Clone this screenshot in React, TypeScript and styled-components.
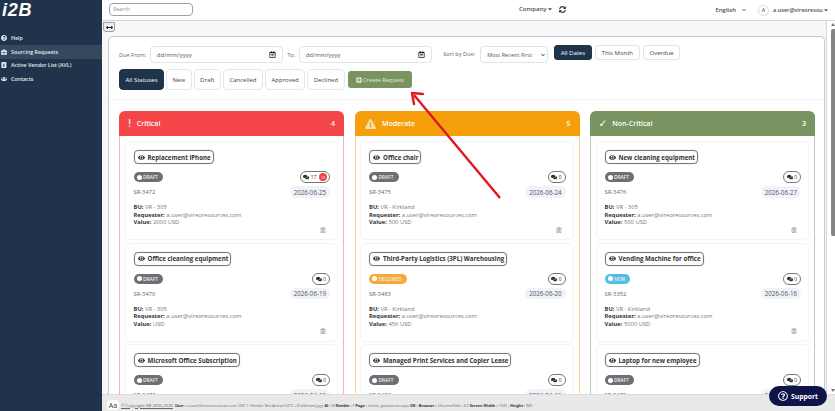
import React from "react";
import styled, { createGlobalStyle } from "styled-components";
import {
  FaAddressBook,
  FaBriefcase,
  FaChevronDown,
  FaComments,
  FaExclamationTriangle,
  FaEye,
  FaPlusSquare,
  FaQuestionCircle,
  FaRegCalendarAlt,
  FaRegQuestionCircle,
  FaRegTrashAlt,
  FaSyncAlt,
  FaUsers,
  FaCaretDown,
  FaArrowsAltH,
} from "react-icons/fa";

const GlobalStyle = createGlobalStyle`
  html, body { margin: 0; padding: 0; height: 100%; overflow: hidden; background: #fff; }
  * { box-sizing: border-box; }
  body { font-family: "Open Sans", "Liberation Sans", sans-serif; color: #3a4048; }
`;

type CardData = {
  title: string;
  status: "DRAFT" | "DECLINED" | "NEW";
  sr: string;
  date: string;
  bu: string;
  value: string;
  comments: string;
  alert?: string;
  trash?: boolean;
};

type ColumnData = {
  name: string;
  count: number;
  color: string;
  edge: string;
  icon: React.ReactNode;
  cards: CardData[];
};

const columns: ColumnData[] = [
  {
    name: "Critical",
    count: 4,
    color: "#f44548",
    edge: "#f9b5b6",
    icon: <Glyph>!</Glyph>,
    cards: [
      { title: "Replacement iPhone", status: "DRAFT", sr: "SR-3472", date: "2026-06-25", bu: "VR - 305", value: "2000 USD", comments: "17", alert: "12", trash: true },
      { title: "Office cleaning equipment", status: "DRAFT", sr: "SR-3470", date: "2026-06-19", bu: "VR - 305", value: "USD", comments: "0", trash: true },
      { title: "Microsoft Office Subscription", status: "DRAFT", sr: "SR-3473", date: "2026-06-15", bu: "VR - 305", value: "USD", comments: "0" },
    ],
  },
  {
    name: "Moderate",
    count: 5,
    color: "#f59f0c",
    edge: "#fbd48d",
    icon: <Triangle />,
    cards: [
      { title: "Office chair", status: "DRAFT", sr: "SR-3475", date: "2026-06-24", bu: "VR - Kirkland", value: "500 USD", comments: "0", trash: true },
      { title: "Third-Party Logistics (3PL) Warehousing", status: "DECLINED", sr: "SR-3483", date: "2026-06-20", bu: "VR - Kirkland", value: "456 USD", comments: "0" },
      { title: "Managed Print Services and Copier Lease", status: "DRAFT", sr: "SR-3482", date: "2026-06-19", bu: "VR - Kirkland", value: "USD", comments: "0" },
    ],
  },
  {
    name: "Non-Critical",
    count: 3,
    color: "#7a9461",
    edge: "#bccaaf",
    icon: <Glyph>✓</Glyph>,
    cards: [
      { title: "New cleaning equipment", status: "DRAFT", sr: "SR-3476", date: "2026-06-27", bu: "VR - 305", value: "500 USD", comments: "0", trash: true },
      { title: "Vending Machine for office", status: "NEW", sr: "SR-3352", date: "2026-06-16", bu: "VR - Kirkland", value: "5000 USD", comments: "0", trash: true },
      { title: "Laptop for new employee", status: "DRAFT", sr: "SR-3471", date: "2026-06-15", bu: "VR - Kirkland", value: "USD", comments: "0" },
    ],
  },
];

const statusColors = { DRAFT: "#6c6f73", DECLINED: "#f6a93b", NEW: "#4fc0e3" };

const statuses = ["All Statuses", "New", "Draft", "Cancelled", "Approved", "Declined"];

const App = () => {
  return (
    <Page>
      <GlobalStyle />
      <Sidebar>
        <Logo>i2B</Logo>
        <Menu>
          <MenuItem><FaQuestionCircle />Help</MenuItem>
          <MenuItem $active><FaBriefcase />Sourcing Requests</MenuItem>
          <MenuItem><FaAddressBook />Active Vendor List (AVL)</MenuItem>
          <MenuItem><FaUsers />Contacts</MenuItem>
        </Menu>
      </Sidebar>
      <Main>
        <TopBar>
          <SearchBox placeholder="Search" />
          <CompanyBlock>
            <TopText>Company</TopText>
            <FaCaretDown size={6} />
            <RefreshIcon><FaSyncAlt size={7} /></RefreshIcon>
          </CompanyBlock>
          <UserBlock>
            <TopText>English</TopText>
            <LanguageChevron><FaChevronDown size={4} /></LanguageChevron>
            <Avatar>A</Avatar>
            <UserText>a.user@vireoresou</UserText>
            <FaCaretDown size={6} />
          </UserBlock>
        </TopBar>
        <Workspace>
          <ScrollArea>
            <SubBar>
              <ToggleButton><FaArrowsAltH size={7} /></ToggleButton>
            </SubBar>
            <Panel>
              <Filters>
                <FilterRow>
                  <FilterLabel>Due From:</FilterLabel>
                  <DateField>dd/mm/yyyy<FaRegCalendarAlt size={7} color="#222" /></DateField>
                  <FilterLabel>To:</FilterLabel>
                  <DateField>dd/mm/yyyy<FaRegCalendarAlt size={7} color="#222" /></DateField>
                  <SortLabel>Sort by Due:</SortLabel>
                  <SortBox>Most Recent First<FaChevronDown size={4} color="#222" /></SortBox>
                  <DateTabs>
                    <DateTab $active>All Dates</DateTab>
                    <DateTab>This Month</DateTab>
                    <DateTab>Overdue</DateTab>
                  </DateTabs>
                </FilterRow>
                <StatusRow>
                  {statuses.map((s, i) => (
                    <StatusButton key={s} $active={i === 0}>{s}</StatusButton>
                  ))}
                  <CreateButton><FaPlusSquare size={6} />Create Request</CreateButton>
                </StatusRow>
              </Filters>
              <Board>
                {columns.map((col) => (
                  <Column key={col.name} $edge={col.edge}>
                    <ColumnHeader $color={col.color}>
                      <ColumnIcon>{col.icon}</ColumnIcon>
                      <ColumnName>{col.name}</ColumnName>
                      <span>{col.count}</span>
                    </ColumnHeader>
                    <CardList>
                      {col.cards.map((card) => (
                        <Card key={card.sr}>
                          <TitlePill><FaEye size={7} />{card.title}</TitlePill>
                          <BadgeRow>
                            <StatusBadge $color={statusColors[card.status]}><Dot />{card.status}</StatusBadge>
                            <CommentPill>
                              <FaComments size={6} />
                              {card.comments}
                              {card.alert && <AlertDot>{card.alert}</AlertDot>}
                            </CommentPill>
                          </BadgeRow>
                          <DateRow>
                            <SrText>{card.sr}</SrText>
                            <DatePill>{card.date}</DatePill>
                          </DateRow>
                          <Details>
                            <div><b>BU:</b> {card.bu}</div>
                            <div><b>Requester:</b> a.user@vireoresources.com</div>
                            <div><b>Value:</b> {card.value}</div>
                          </Details>
                          <TrashSlot>{card.trash && <FaRegTrashAlt size={6} />}</TrashSlot>
                        </Card>
                      ))}
                    </CardList>
                  </Column>
                ))}
              </Board>
            </Panel>
          </ScrollArea>
          <Scrollbar>
            <ScrollArrow $up />
            <ScrollThumb />
            <ScrollArrow />
          </Scrollbar>
        </Workspace>
        <Footer>
          <FontToggle>Aa</FontToggle>
          <u>© Copyright GB 2000-2026</u>
          <FooterInfo><b>User :</b> a.user@vireoresources.com USD 1 (Vendor Not Active) (UTC +0) dd/mm/yyyy <b>AI :</b> N <b>Nimble :</b> Y <b>Page :</b> sinnle_quotations.aspx <b>OK :</b> <b>Browser :</b> Chrome/Edit : 3.0 <b>Screen Width :</b> 1920 ; <b>Height :</b> 945</FooterInfo>
        </Footer>
      </Main>
      <SupportButton><FaRegQuestionCircle size={10} />Support</SupportButton>
      <ArrowOverlay width="835" height="411" viewBox="0 0 835 411">
        <path d="M500 198 L414 95" stroke="#e3161b" strokeWidth="2.4" fill="none" />
        <path d="M412 93 L423 94 M412 93 L414 104" stroke="#e3161b" strokeWidth="2.4" fill="none" strokeLinecap="round" />
      </ArrowOverlay>
    </Page>
  );
};

export default App;

function Glyph({ children }: { children: React.ReactNode }) {
  return <GlyphText>{children}</GlyphText>;
}

function Triangle() {
  return <TriangleIcon><FaExclamationTriangle /></TriangleIcon>;
}

const GlyphText = styled.span`
  font: 10.5px/11px "DejaVu Sans", sans-serif;
  color: #fff;
`;

const TriangleIcon = styled.span`
  display: flex;
  margin: 0 1px 0 2px;
  color: #f8dfae;
  svg { width: 11px; height: 10px; }
`;

const Page = styled.div`
  position: relative;
  display: flex;
  width: 835px;
  height: 411px;
  overflow: hidden;
`;

const Sidebar = styled.aside`
  width: 102px;
  flex-shrink: 0;
  background: #1f344b;
  color: #fff;
`;

const Logo = styled.div`
  height: 31px;
  padding: 1px 0 0 2px;
  font: italic 900 18px/18px "Liberation Sans", sans-serif;
  letter-spacing: 0.7px;
`;

const Menu = styled.nav`
  display: flex;
  flex-direction: column;
`;

const MenuItem = styled.div<{ $active?: boolean }>`
  display: flex;
  align-items: center;
  gap: 4px;
  height: 13.8px;
  padding-left: 1px;
  font-size: 5.3px;
  font-weight: 600;
  color: #e6ebf0;
  background: ${(p) => (p.$active ? "#34485e" : "transparent")};
  svg { width: 6px; height: 6px; flex-shrink: 0; }
`;

const Main = styled.div`
  flex: 1;
  min-width: 0;
  display: flex;
  flex-direction: column;
`;

const TopBar = styled.header`
  position: relative;
  height: 21px;
  flex-shrink: 0;
  display: flex;
  align-items: center;
  padding-left: 7px;
  background: #fff;
  border-bottom: 1px solid #d5d7da;
`;

const SearchBox = styled.input`
  width: 84px;
  height: 13px;
  padding: 0 3px;
  border: 1px solid #98a2ad;
  border-radius: 4px;
  font: 5.4px "Open Sans", sans-serif;
  outline: none;
  margin-bottom: 2px;
  &::placeholder { color: #8b8f94; }
`;

const TopText = styled.span`
  font-size: 6px;
  font-weight: 600;
  color: #4a4f55;
`;

const UserText = styled(TopText)`
  font-size: 5.5px;
`;

const CompanyBlock = styled.div`
  display: flex;
  align-items: center;
  gap: 1px;
  margin-left: 326px;
  margin-bottom: 2px;
  color: #444;
`;

const RefreshIcon = styled.span`
  display: flex;
  margin-left: 5px;
  color: #333;
`;

const UserBlock = styled.div`
  display: flex;
  align-items: center;
  margin-left: 149px;
  color: #555;
`;

const LanguageChevron = styled.span`
  display: flex;
  margin: 0 12px 0 6px;
`;

const Avatar = styled.span`
  width: 11px;
  height: 11px;
  margin-right: 4px;
  display: flex;
  align-items: center;
  justify-content: center;
  border: 1px solid #d7dbe0;
  border-radius: 50%;
  font-size: 5.4px;
  color: #444;
`;

const Workspace = styled.div`
  flex: 1;
  min-height: 0;
  display: flex;
`;

const ScrollArea = styled.div`
  flex: 1;
  min-width: 0;
  overflow: hidden;
  background: #f7f7f8;
`;

const SubBar = styled.div`
  height: 15px;
  padding-top: 1px;
`;

const ToggleButton = styled.div`
  width: 12px;
  height: 10px;
  margin-left: 1px;
  display: flex;
  align-items: center;
  justify-content: center;
  background: #eceef0;
  border: 1px solid #9aa3ac;
  border-radius: 0 0 3px 3px;
  color: #222;
`;

const Panel = styled.section`
  margin: 0 0 0 6px;
  width: 717px;
  background: #fff;
  border: 1px solid #c4cad1;
  border-bottom: none;
  border-radius: 5px 5px 0 0;
`;

const Filters = styled.div`
  padding: 9px 10px 9px;
  border-bottom: 1px solid #f4f4f5;
`;

const FilterRow = styled.div`
  display: flex;
  align-items: flex-start;
  height: 17px;
`;

const FilterLabel = styled.span`
  align-self: center;
  margin-right: 3.5px;
  font-size: 5.6px;
  color: #666;
`;

const SortLabel = styled(FilterLabel)`
  align-self: flex-start;
  margin: 4px 5px 0 7px;
`;

const DateField = styled.div`
  width: 133.5px;
  height: 17px;
  margin-right: 4px;
  padding: 0 6px;
  display: flex;
  align-items: center;
  justify-content: space-between;
  border: 1px solid #dfe4ea;
  border-radius: 4px;
  font-size: 6px;
  color: #555;
`;

const SortBox = styled.div`
  width: 68px;
  height: 17px;
  padding: 0 2px 0 6px;
  display: flex;
  align-items: center;
  justify-content: space-between;
  border: 1px solid #dfe4ea;
  border-radius: 4px;
  font-size: 5.6px;
  color: #555;
  white-space: nowrap;
`;

const DateTabs = styled.div`
  display: flex;
  gap: 3.5px;
  margin: -1px 0 0 6px;
`;

const DateTab = styled.div<{ $active?: boolean }>`
  height: 15px;
  padding: 0 5.5px;
  display: flex;
  align-items: center;
  border: 1px solid ${(p) => (p.$active ? "#1f344b" : "#dfe4ea")};
  border-radius: 3px;
  background: ${(p) => (p.$active ? "#1f344b" : "#fff")};
  color: ${(p) => (p.$active ? "#fff" : "#444")};
  font-size: 6px;
`;

const StatusRow = styled.div`
  display: flex;
  align-items: center;
  gap: 2px;
  margin-top: 6px;
`;

const StatusButton = styled.div<{ $active?: boolean }>`
  height: 21px;
  padding: 0 5.5px;
  display: flex;
  align-items: center;
  border: 1px solid ${(p) => (p.$active ? "#1f344b" : "#e3e6ea")};
  border-radius: 4px;
  background: ${(p) => (p.$active ? "#1f344b" : "#fff")};
  color: ${(p) => (p.$active ? "#fff" : "#444")};
  font-size: 6px;
`;

const CreateButton = styled.div`
  height: 17px;
  width: 64px;
  margin-left: 1.5px;
  display: flex;
  align-items: center;
  justify-content: center;
  gap: 1px;
  border-radius: 3px;
  background: #7a9461;
  color: #e3e9dc;
  font-size: 5.8px;
`;

const Board = styled.div`
  display: grid;
  grid-template-columns: repeat(3, 225px);
  gap: 10.5px;
  padding: 11px 10px 0;
`;

const Column = styled.div<{ $edge: string }>`
  border: 1px solid ${(p) => p.$edge};
  border-top: none;
  border-radius: 6px 6px 0 0;
`;

const ColumnHeader = styled.div<{ $color: string }>`
  height: 25px;
  margin: 0 -1px;
  padding: 0 9px 0 8.5px;
  display: flex;
  align-items: center;
  background: ${(p) => p.$color};
  border-radius: 6px 6px 0 0;
  color: #fff;
  font-size: 7px;
  font-weight: 600;
`;

const ColumnIcon = styled.span`
  display: flex;
  margin-right: 5px;
`;

const ColumnName = styled.span`
  flex: 1;
`;

const CardList = styled.div`
  display: flex;
  flex-direction: column;
  gap: 2.5px;
  padding: 5px 5px 0 4.5px;
`;

const Card = styled.article`
  height: 99px;
  padding: 8px 7px 0 8px;
  border: 1px solid #f2f3f5;
  border-radius: 5px;
  background: #fff;
`;

const TitlePill = styled.div`
  display: flex;
  align-items: center;
  gap: 3px;
  width: fit-content;
  height: 14px;
  padding: 0 2px 0 3px;
  border: 1px solid #777;
  border-radius: 4px;
  box-shadow: 0 0 1px #aaa;
  color: #333;
  font-size: 6.15px;
  font-weight: 700;
  white-space: nowrap;
`;

const BadgeRow = styled.div`
  display: flex;
  align-items: center;
  justify-content: space-between;
  height: 12px;
  margin-top: 7px;
`;

const DateRow = styled(BadgeRow)`
  margin-top: 3px;
`;

const StatusBadge = styled.span<{ $color: string }>`
  display: inline-flex;
  align-items: center;
  gap: 1.5px;
  height: 10px;
  padding: 0 5px 0 3px;
  border-radius: 5px;
  background: ${(p) => p.$color};
  color: #eee;
  font-size: 4.8px;
  font-weight: 600;
`;

const Dot = styled.i`
  width: 5px;
  height: 5px;
  border-radius: 50%;
  background: #fff;
`;

const CommentPill = styled.span`
  display: inline-flex;
  align-items: center;
  justify-content: center;
  gap: 1.5px;
  min-width: 18px;
  height: 12px;
  padding: 0 2px;
  border: 1px solid #777;
  border-radius: 6px;
  color: #333;
  font-size: 5px;
`;

const AlertDot = styled.span`
  width: 8px;
  height: 8px;
  margin-left: 1px;
  display: flex;
  align-items: center;
  justify-content: center;
  border-radius: 50%;
  background: #e8474a;
  color: #fff;
  font-size: 3.6px;
`;

const SrText = styled.span`
  font-size: 5.8px;
  color: #666;
`;

const DatePill = styled.span`
  height: 11.5px;
  padding: 0 4px;
  display: flex;
  align-items: center;
  border-radius: 6px;
  background: #eff3f9;
  color: #555;
  font-size: 6.2px;
`;

const Details = styled.div`
  margin-top: 6px;
  font-size: 5.8px;
  line-height: 7.6px;
  color: #777;
  b { color: #333; font-weight: 700; }
`;

const TrashSlot = styled.div`
  height: 8px;
  display: flex;
  justify-content: flex-end;
  padding-right: 4px;
  color: #888;
`;

const Scrollbar = styled.div`
  width: 9px;
  flex-shrink: 0;
  display: flex;
  flex-direction: column;
  align-items: flex-end;
  padding: 2px 0;
  background: #fff;
  border-left: 1px solid #d5d7da;
`;

const ScrollArrow = styled.i<{ $up?: boolean }>`
  width: 0;
  height: 0;
  border-left: 2.5px solid transparent;
  border-right: 2.5px solid transparent;
  ${(p) => (p.$up ? "border-bottom: 3px solid #777;" : "border-top: 3px solid #777; margin-top: auto;")}
`;

const ScrollThumb = styled.div`
  width: 4px;
  height: 207px;
  margin-top: 3px;
  border-radius: 2px 0 0 2px;
  background: #858585;
`;

const Footer = styled.footer`
  height: 17px;
  flex-shrink: 0;
  display: flex;
  align-items: center;
  gap: 2px;
  padding: 4px 0 0 5px;
  background: #e9e9e9;
  border-top: 1px solid #dcdcdc;
  font-size: 4.2px;
  color: #666;
  white-space: nowrap;
  b { color: #333; }
`;

const FooterInfo = styled.span`
  font-size: 3.85px;
`;

const FontToggle = styled.span`
  width: 12px;
  height: 10px;
  display: flex;
  align-items: center;
  justify-content: center;
  border-radius: 4px;
  background: #fff;
  font-size: 7px;
  color: #333;
`;

const SupportButton = styled.div`
  position: absolute;
  right: 8px;
  bottom: 5px;
  width: 58px;
  height: 20px;
  display: flex;
  align-items: center;
  justify-content: center;
  gap: 3px;
  border-radius: 10px;
  background: #0e1448;
  color: #fff;
  font-size: 6.8px;
  font-weight: 700;
`;

const ArrowOverlay = styled.svg`
  position: absolute;
  inset: 0;
  pointer-events: none;
`;
